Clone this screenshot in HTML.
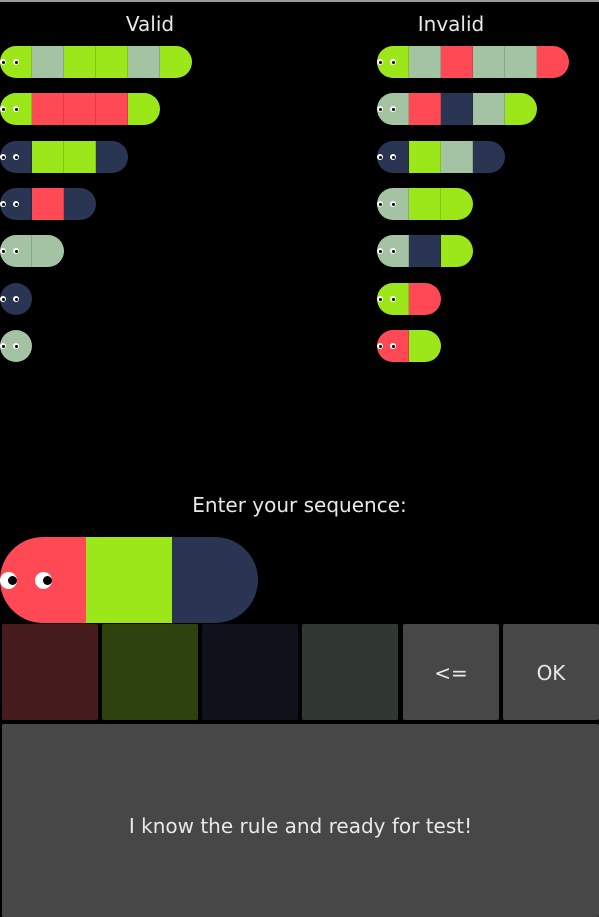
<!DOCTYPE html>
<html><head><style>
body{margin:0;width:599px;height:917px;background:#000;position:relative;overflow:hidden;font-family:"DejaVu Sans","Liberation Sans",sans-serif;color:#e8e8e8}
.top{position:absolute;left:0;top:0;width:599px;height:2px;background:#9a9a9a}
.t{position:absolute;font-size:20px;line-height:24px;text-align:center}
.w{position:absolute;height:32px;border-radius:16px;overflow:hidden;display:flex}
.w div{width:32px;height:32px;box-shadow:inset -1px 0 0 rgba(0,0,0,0.15)}
.w div:last-child{box-shadow:none}
.g{background:#9ce71a}.s{background:#a4c3a2}.r{background:#ff4a56}.n{background:#2a3553}
.e{position:absolute;width:6px;height:6px;border-radius:50%;background:#fff;top:13px}
.e::after{content:"";position:absolute;left:2px;top:2px;width:3px;height:3px;border-radius:50%;background:#000}
.big{position:absolute;left:0;top:537px;height:86px;width:258px;border-radius:43px;overflow:hidden;display:flex}
.big div{width:86px;height:86px}
.E{position:absolute;width:17px;height:17px;border-radius:50%;background:#fff;top:572px}
.E::after{content:"";position:absolute;left:8px;top:4px;width:9px;height:9px;border-radius:50%;background:#000}
.b{position:absolute;top:624px;height:96px;border-radius:2px;display:flex;align-items:center;justify-content:center;font-size:20px;color:#e8e8e8}
</style></head><body>
<div class="top"></div>
<div class="t" style="left:100px;top:12px;width:100px">Valid</div>
<div class="t" style="left:401px;top:12px;width:100px">Invalid</div>

<div class="w" style="left:0;top:46px"><div class="g"></div><div class="s"></div><div class="g"></div><div class="g"></div><div class="s"></div><div class="g"></div></div>
<div class="w" style="left:0;top:93px"><div class="g"></div><div class="r"></div><div class="r"></div><div class="r"></div><div class="g"></div></div>
<div class="w" style="left:0;top:141px"><div class="n"></div><div class="g"></div><div class="g"></div><div class="n"></div></div>
<div class="w" style="left:0;top:188px"><div class="n"></div><div class="r"></div><div class="n"></div></div>
<div class="w" style="left:0;top:235px"><div class="s"></div><div class="s"></div></div>
<div class="w" style="left:0;top:283px"><div class="n"></div></div>
<div class="w" style="left:0;top:330px"><div class="s"></div></div>

<div class="w" style="left:377px;top:46px"><div class="g"></div><div class="s"></div><div class="r"></div><div class="s"></div><div class="s"></div><div class="r"></div></div>
<div class="w" style="left:377px;top:93px"><div class="s"></div><div class="r"></div><div class="n"></div><div class="s"></div><div class="g"></div></div>
<div class="w" style="left:377px;top:141px"><div class="n"></div><div class="g"></div><div class="s"></div><div class="n"></div></div>
<div class="w" style="left:377px;top:188px"><div class="s"></div><div class="g"></div><div class="g"></div></div>
<div class="w" style="left:377px;top:235px"><div class="s"></div><div class="n"></div><div class="g"></div></div>
<div class="w" style="left:377px;top:283px"><div class="g"></div><div class="r"></div></div>
<div class="w" style="left:377px;top:330px"><div class="r"></div><div class="g"></div></div>

<div class="e" style="left:0;top:59px"></div><div class="e" style="left:13px;top:59px"></div>
<div class="e" style="left:0;top:106px"></div><div class="e" style="left:13px;top:106px"></div>
<div class="e" style="left:0;top:154px"></div><div class="e" style="left:13px;top:154px"></div>
<div class="e" style="left:0;top:201px"></div><div class="e" style="left:13px;top:201px"></div>
<div class="e" style="left:0;top:248px"></div><div class="e" style="left:13px;top:248px"></div>
<div class="e" style="left:0;top:296px"></div><div class="e" style="left:13px;top:296px"></div>
<div class="e" style="left:0;top:343px"></div><div class="e" style="left:13px;top:343px"></div>
<div class="e" style="left:377px;top:59px"></div><div class="e" style="left:390px;top:59px"></div>
<div class="e" style="left:377px;top:106px"></div><div class="e" style="left:390px;top:106px"></div>
<div class="e" style="left:377px;top:154px"></div><div class="e" style="left:390px;top:154px"></div>
<div class="e" style="left:377px;top:201px"></div><div class="e" style="left:390px;top:201px"></div>
<div class="e" style="left:377px;top:248px"></div><div class="e" style="left:390px;top:248px"></div>
<div class="e" style="left:377px;top:296px"></div><div class="e" style="left:390px;top:296px"></div>
<div class="e" style="left:377px;top:343px"></div><div class="e" style="left:390px;top:343px"></div>

<div class="t" style="left:0;top:493px;width:599px">Enter your sequence:</div>
<div class="big"><div class="r"></div><div class="g"></div><div class="n"></div></div>
<div class="E" style="left:0"></div><div class="E" style="left:35px"></div>

<div class="b" style="left:2px;width:96px;background:#461b1e"></div>
<div class="b" style="left:102px;width:96px;background:#2e4210"></div>
<div class="b" style="left:202px;width:96px;background:#0f121b"></div>
<div class="b" style="left:302px;width:96px;background:#313831"></div>
<div class="b" style="left:403px;width:96px;background:#474747;padding-top:2px;box-sizing:border-box">&lt;=</div>
<div class="b" style="left:503px;width:96px;background:#474747;padding-top:2px;box-sizing:border-box">OK</div>
<div class="b" style="left:2px;top:724px;width:597px;height:193px;background:#474747;padding-top:10px;box-sizing:border-box">I know the rule and ready for test!</div>
</body></html>
